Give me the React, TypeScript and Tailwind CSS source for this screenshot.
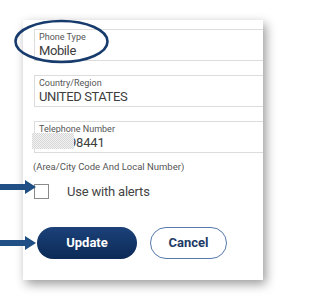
import React from "react";

function Field({
    label,
    value,
    children,
}: {
    label: string;
    value?: string;
    children?: React.ReactNode;
}) {
    return (
        <div className="relative h-[32px] border-y border-l border-[#dcdcdc] pl-[4px] pt-[2px]">
            <div className="text-[9px] leading-[11px] text-[#555]">{label}</div>
            {value !== undefined ? (
                <div className="text-[13px] leading-[16px] tracking-[-0.4px] text-[#3d3d3d]">
                    {value}
                </div>
            ) : (
                children
            )}
        </div>
    );
}

function Arrow({ className }: { className: string }) {
    return (
        <svg
            className={className}
            width="37"
            height="16"
            viewBox="0 0 37 16"
        >
            <rect x="0" y="5" width="27" height="6" fill="#1f4f84" />
            <polygon points="25,1 36,8 25,15" fill="#1f4f84" />
        </svg>
    );
}

export default function App() {
    return (
        <div className="relative h-[300px] w-[283px] overflow-hidden bg-white font-['Roboto',sans-serif]">
            <div className="pl-[23px] pt-[20px]">
                <div className="flex h-[260px] w-[240px] flex-col bg-white pl-[11px] pt-[9px] shadow-[3px_4px_10px_rgba(0,0,0,0.4)]">
                    <div className="flex flex-col gap-[14px]">
                        <Field label="Phone Type" value="Mobile" />
                        <Field label="Country/Region" value="UNITED STATES" />
                        <Field label="Telephone Number">
                            <div className="relative text-[13px] leading-[16px] tracking-[-0.2px] text-[#3d3d3d]">
                                <span className="pl-[30px]">98441</span>
                                <div className="absolute left-[-7px] top-[-2px] h-[16px] w-[42px] bg-[repeating-conic-gradient(#d6d6d6_0%_25%,#f3f3f3_0%_50%)] bg-[length:2px_2px]" />
                            </div>
                        </Field>
                    </div>
                    <div className="ml-[-1px] mt-[8px] text-[9.5px] leading-[12px] text-[#555]">
                        (Area/City Code And Local Number)
                    </div>
                    <div className="mt-[9px] flex items-center">
                        <div className="h-[15px] w-[15px] border border-[#8a8a8a] bg-white" />
                        <span className="ml-[18px] text-[13px] tracking-[-0.2px] text-[#444]">
                            Use with alerts
                        </span>
                    </div>
                    <div className="mt-[25px] flex items-center gap-[13px]">
                        <button className="ml-[3px] h-[32px] w-[100px] rounded-full bg-gradient-to-b from-[#1c427a] to-[#0b2a56] text-[13px] font-bold text-white">
                            Update
                        </button>
                        <button className="h-[32px] w-[77px] rounded-full border border-[#5579ad] bg-white text-[13px] font-bold text-[#1d3a66]">
                            Cancel
                        </button>
                    </div>
                </div>
            </div>
            <svg
                className="absolute left-[13px] top-[19px]"
                width="97"
                height="45"
                viewBox="0 0 97 45"
            >
                <ellipse
                    cx="48.5"
                    cy="22.5"
                    rx="46"
                    ry="20.5"
                    fill="none"
                    stroke="#173b6c"
                    strokeWidth="2.6"
                />
            </svg>
            <Arrow className="absolute left-0 top-[179px]" />
            <Arrow className="absolute left-0 top-[235px]" />
        </div>
    );
}
